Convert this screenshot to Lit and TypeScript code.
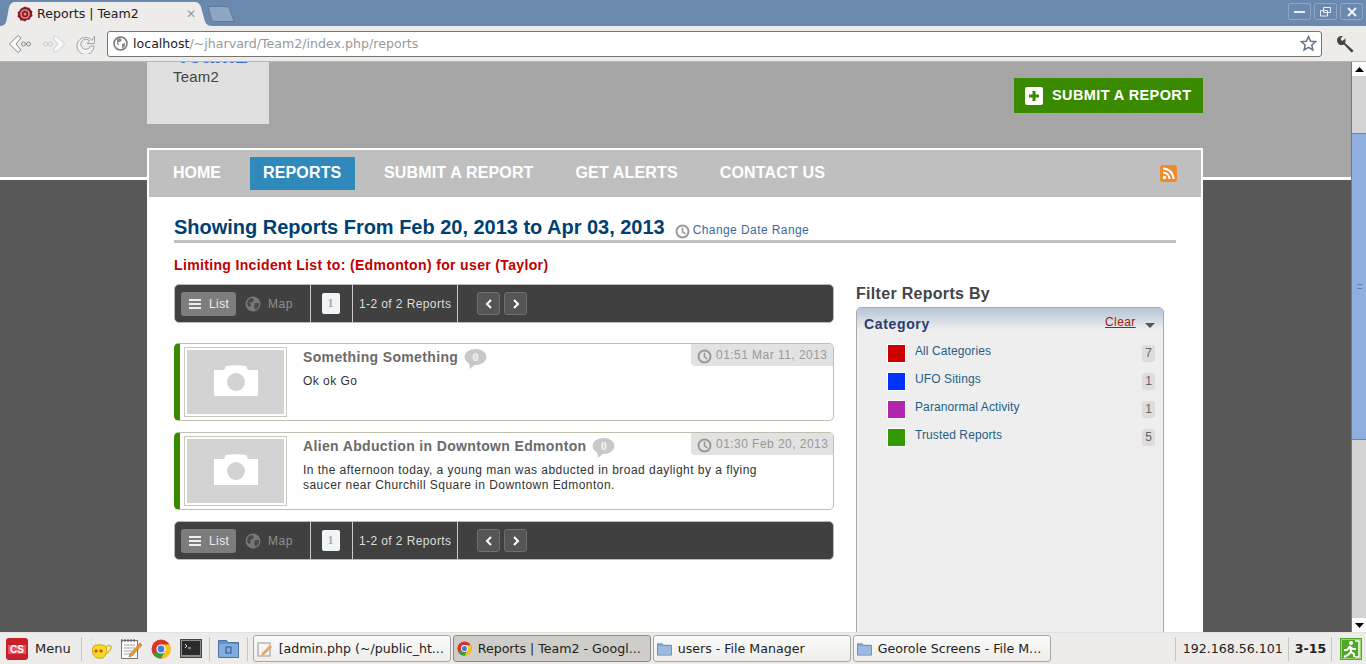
import { LitElement, html, css } from 'lit';
import { customElement } from 'lit/decorators.js';

const clock = (c = '#999') => html`<svg class="clock" width="15" height="15" viewBox="0 0 15 15"><circle cx="7.5" cy="7.5" r="6" fill="none" stroke=${c} stroke-width="2"/><path d="M7.5 3.8v4l3 2" fill="none" stroke=${c} stroke-width="1.6"/></svg>`;

const chromeIcon = (s: number) => html`<svg width=${s} height=${s} viewBox="0 0 20 20">
  <circle cx="10" cy="10" r="9.5" fill="#d8362a"/>
  <path d="M10 10 1.8 14.8A9.5 9.5 0 0 0 10 19.5L14.8 11z" fill="#3c9a3c"/>
  <path d="M10 5.5h8.6A9.5 9.5 0 0 1 10 19.5L14 12z" fill="#f5c518"/>
  <circle cx="10" cy="10" r="4.6" fill="#fff"/><circle cx="10" cy="10" r="3.4" fill="#3f7fd8"/>
</svg>`;

const folderIcon = html`<svg width="15" height="14" viewBox="0 0 16 14"><path d="M0.5 1.5h5l1.5 1.5h8.5v10.5h-15z" fill="#86a9d2" stroke="#6a8cb5"/><rect x="1" y="4" width="14" height="9" fill="#9dbbdf"/></svg>`;

const globeDark = html`<svg width="16" height="16" viewBox="0 0 16 16"><circle cx="8" cy="8" r="7.5" fill="#777"/><path d="M3 4l3-2 3 1-1 3-3 1 1 3-2 1-2-3zM10 7l4 0 0 3-3 4-2-3z" fill="#4a4a4a"/></svg>`;

const camera = html`<svg width="44" height="31" viewBox="0 0 44 31"><path d="M0 5h10l2-4c6-1 14-1 20 0l2 4h10v26H0z" fill="#fff"/><circle cx="22" cy="17" r="9" fill="#d3d3d3"/></svg>`;

const listIcon = html`<svg width="12" height="10" viewBox="0 0 12 10"><path d="M0 0h12v2H0zM0 4h12v2H0zM0 8h12v2H0z" fill="#eee"/></svg>`;

@customElement('app-root')
export class AppRoot extends LitElement {
  static styles = css`
    :host { display: flex; flex-direction: column; width: 1366px; height: 664px; overflow: hidden; font-family: "Liberation Sans", Arial, sans-serif; background: #edecea; }
    * { box-sizing: border-box; }

    /* browser chrome */
    .tabstrip { height: 26px; background: #6b88ae; display: flex; align-items: flex-end; flex: none; }
    .tab { position: relative; width: 212px; height: 24px; display: flex; align-items: center; padding: 0 0 1px 17px; font: 12.6px "DejaVu Sans", sans-serif; color: #222; }
    .tab > svg.shape { position: absolute; left: 0; top: 0; }
    .tab .fav, .tab .label { position: relative; }
    .tab .fav { margin-right: 4px; flex: none; }
    .tab .x { position: absolute; left: 186px; top: 5px; color: #999; font-size: 12px; font-weight: bold; }
    .newtab { margin: 0 0 4px -5px; }
    .winbtns { margin-left: auto; display: flex; gap: 3px; align-self: flex-start; padding: 3px 3px 0 0; }
    .winbtn { width: 23px; height: 17px; border: 1px solid #8ea5c4; border-radius: 2px; background: #6b88ae; display: flex; align-items: center; justify-content: center; }
    .toolbar { height: 36px; background: #edecea; border-bottom: 1px solid #b5b4b0; display: flex; align-items: center; flex: none; padding: 0 0 0 8px; }
    .navico { display: flex; width: 34px; flex: none; }
    .navico.reload { width: 31px; }
    .omni { width: 1215px; height: 26px; flex: none; background: #fff; border: 1px solid #77756f; border-radius: 3px; display: flex; align-items: center; padding: 0 4px 0 5px; font: 12.6px "DejaVu Sans", sans-serif; color: #999; }
    .omni b { font-weight: normal; color: #222; }
    .omni span { margin-left: 5px; flex: 1; }
    .wrench { margin-left: 14px; flex: none; }

    /* page */
    .view { flex: 1; display: flex; min-height: 0; }
    .page { flex: 1; min-width: 0; overflow: hidden; padding-left: 147px; background: linear-gradient(#a6a6a6 115px, #fff 115px, #fff 118px, #585858 118px); }
    .wrap { width: 1056px; }
    .head { height: 86px; display: flex; justify-content: space-between; align-items: flex-start; }
    .logo { width: 122px; height: 62px; background: #e0e0e0; overflow: hidden; padding-left: 26px; color: #444; font-size: 15px; letter-spacing: 0.2px; }
    .logo .name { color: #3b6fd0; font-weight: bold; font-size: 23px; line-height: 22px; margin: -18px 0 0 3px; height: 22px; }
    .logo .sub { margin-top: 3px; line-height: 16px; }
    .submit { margin-top: 16px; width: 189px; height: 35px; background: #3a8a00; color: #fff; font-weight: bold; font-size: 14.5px; display: flex; align-items: center; padding: 0 0 2px 11px; gap: 9px; letter-spacing: 0.4px; }
    .plus { width: 18px; height: 18px; background: #fff; border-radius: 2px; display: flex; position: relative; top: 1px; }

    .nav { height: 49px; background: #bfbfbf; border: 2px solid #fff; border-bottom: 0; display: flex; align-items: flex-start; padding: 7px 24px 0 11px; }
    .nav a { height: 33px; padding: 0 13px 2px; margin-right: 16px; display: flex; align-items: center; color: #fff; font-weight: bold; font-size: 16px; letter-spacing: 0.15px; }
    .nav a:first-child { letter-spacing: 0; }
    .nav a.on { background: #2f8abb; width: 105px; }
    .rss { margin: 8px 0 0 auto; }

    .body { background: #fff; height: 500px; padding: 18px 27px 0; }
    .title { display: flex; align-items: baseline; border-bottom: 3px solid #c0c0c0; height: 28px; }
    .title h1 { margin: 0; font-size: 20px; line-height: 25px; color: #003f73; letter-spacing: -0.02px; }
    .title .clock { margin: 0 3px 0 10px; align-self: flex-end; position: relative; top: -1px; }
    .title a { color: #3a69a0; font-size: 12px; letter-spacing: 0.42px; }
    .limit { margin: 13px 0 10px; font-weight: bold; font-size: 14px; line-height: 18px; color: #c00000; letter-spacing: 0.35px; }

    .cols { display: flex; }
    .left { width: 660px; }
    .right { width: 308px; margin-left: 22px; }

    .bar { height: 39px; background: #404040; border: 1px solid #bbb; border-radius: 5px; display: flex; align-items: center; padding-left: 6px; color: #ddd; font-size: 12px; letter-spacing: 0.4px; }
    .list { width: 55px; height: 24px; background: #7d7d7d; border-radius: 3px; display: flex; align-items: center; gap: 8px; padding-left: 8px; color: #eee; }
    .map { display: flex; align-items: center; gap: 7px; width: 74px; padding-left: 9px; color: #8f8f8f; letter-spacing: 0.5px; }
    .pg { width: 42px; height: 100%; border-left: 1px solid #ccc; display: flex; align-items: center; justify-content: center; padding-right: 2px; }
    .pg span { width: 18px; height: 21px; background: #f0f5f8; border-radius: 2px; color: #aaa; font: bold 12px/21px "Liberation Serif", serif; text-align: center; letter-spacing: 0; }
    .cnt { width: 106px; height: 100%; border-left: 1px solid #ccc; border-right: 1px solid #ccc; display: flex; align-items: center; padding-left: 6px; white-space: nowrap; }
    .arrow { width: 23px; height: 23px; border: 1px solid #6f6f6f; background: #555; border-radius: 3px; display: flex; align-items: center; justify-content: center; }
    .arrow.p { margin: 0 4px 0 19px; }

    .card { position: relative; height: 78px; margin-top: 11px; border: 1px solid #c0bfb2; border-left: 6px solid #3a8a00; border-radius: 5px; display: flex; background: #fff; }
    .bar + .card { margin-top: 20px; }
    .thumb { width: 103px; height: 70px; margin: 3px 0 0 4px; border: 1px solid #c8c8bc; padding: 2px; flex: none; }
    .thumb div { height: 100%; background: #d3d3d3; display: flex; align-items: center; justify-content: center; padding-bottom: 3px; }
    .txt { margin-left: 16px; width: 470px; }
    .t { display: flex; align-items: flex-start; color: #6b6b6b; font-weight: bold; font-size: 14px; line-height: 18px; margin-top: 4px; letter-spacing: 0.35px; }
    .bubble { margin: 1px 0 0 6px; width: 23px; height: 21px; position: relative; }
    .bubble span { position: absolute; left: 0; top: 1px; width: 23px; text-align: center; color: #f2f2f2; font: bold 12px/15px "Liberation Serif", serif; }
    .d { margin-top: 4px; font-size: 12px; line-height: 15px; color: #333; letter-spacing: 0.46px; }
    .date { position: absolute; right: 0; top: 0; width: 142px; height: 22px; background: #e2e2e2; border-radius: 0 4px 0 4px; color: #999; font-size: 12px; letter-spacing: 0.46px; display: flex; align-items: center; padding-left: 6px; gap: 4px; white-space: nowrap; }
    .date .clock { position: relative; top: 1px; flex: none; }
    .bar.bottom { margin-top: 11px; }

    .right h2 { margin: 0; font-size: 16px; line-height: 20px; color: #444; letter-spacing: 0.3px; }
    .panel { margin-top: 3px; height: 420px; background: #eee; border: 1px solid #aaa; border-radius: 5px 5px 0 0; }
    .ph { height: 22px; background: linear-gradient(#b5c5d8, #eee); display: flex; padding: 8px 0 0 7px; border-radius: 4px 4px 0 0; position: relative; }
    .ph b { color: #2c3a70; font-size: 14px; line-height: 17px; letter-spacing: 0.65px; }
    .ph a { position: absolute; left: 248px; top: 7px; color: #a0200a; font-size: 12px; line-height: 15px; text-decoration: underline; letter-spacing: 0.4px; }
    .caret { position: absolute; left: 288px; top: 15px; width: 0; height: 0; border: 5px solid transparent; border-top: 5px solid #555; border-bottom: 0; }
    .cat { height: 28px; display: flex; position: relative; padding-left: 30px; }
    .cats { padding-top: 14px; }
    .sw { width: 19px; height: 19px; border: 1px solid #fff; flex: none; }
    .cat a { margin-left: 9px; color: #1f5f85; font-size: 12px; line-height: 15px; letter-spacing: 0.1px; }
    .n { position: absolute; left: 285px; top: 1px; width: 13px; height: 17px; background: #ddd; border-radius: 3px; color: #666; font-size: 12px; line-height: 17px; text-align: center; }

    .scroll { width: 15px; flex: none; background: #d4d4d4; border-left: 1px solid #777; display: flex; flex-direction: column; }
    .sbtn { height: 14px; background: #fff; display: flex; align-items: center; justify-content: center; flex: none; }
    .track { flex: 1; padding-top: 57px; }
    .thumbbar { height: 307px; background: #8fb0df; border-top: 1px solid #6f87a8; border-bottom: 1px solid #6f87a8; display: flex; align-items: center; justify-content: center; }
    .thumbbar i { width: 5px; height: 5px; border-top: 1px solid #5d7cab; border-bottom: 1px solid #5d7cab; }

    /* taskbar */
    .task { height: 32px; flex: none; background: #edecea; display: flex; align-items: center; font: 12.6px "DejaVu Sans", sans-serif; color: #222; padding-left: 6px; border-top: 1px solid #e2e1de; white-space: nowrap; }
    .task > svg { flex: none; }
    .sep { width: 1px; height: 24px; background: #c6c5c1; flex: none; }
    .menu { margin: 0 10px 0 7px; font-size: 13px; }
    .ti { margin-left: 8px; width: 22px; display: flex; justify-content: center; flex: none; }
    .win { width: 198px; height: 27px; flex: none; margin-right: 2px; border: 1px solid #a8a7a3; border-radius: 3px; background: linear-gradient(#fbfbfa, #eeedeb); display: flex; align-items: center; padding-left: 3px; gap: 6px; overflow: hidden; }
    .win svg { flex: none; }
    .win.on { background: #cfcdc9; border-color: #8c8b87; }
    .ip { width: 112px; padding-left: 7px; flex: none; }
    .time { width: 42px; padding-left: 6px; font-weight: bold; flex: none; }
  `;

  private bar(cls = '') {
    return html`<div class="bar ${cls}">
      <div class="list">${listIcon}List</div>
      <div class="map">${globeDark}Map</div>
      <div class="pg"><span>1</span></div>
      <div class="cnt">1-2 of 2 Reports</div>
      <div class="arrow p"><svg width="8" height="10" viewBox="0 0 8 10"><path d="M6 1 2 5l4 4" fill="none" stroke="#fff" stroke-width="2"/></svg></div>
      <div class="arrow"><svg width="8" height="10" viewBox="0 0 8 10"><path d="M2 1l4 4-4 4" fill="none" stroke="#fff" stroke-width="2"/></svg></div>
    </div>`;
  }

  private card(title: string, date: string, desc: unknown) {
    return html`<div class="card">
      <div class="thumb"><div>${camera}</div></div>
      <div class="txt">
        <div class="t">${title}
          <div class="bubble"><svg width="23" height="21" viewBox="0 0 23 21"><ellipse cx="11.5" cy="8" rx="11" ry="8" fill="#c8c8c8"/><path d="M5 12l1 8 7-6z" fill="#c8c8c8"/></svg><span>0</span></div>
        </div>
        <div class="d">${desc}</div>
      </div>
      <div class="date">${clock()}${date}</div>
    </div>`;
  }

  render() {
    const cats = [
      ['All Categories', '#cc0000', '7'],
      ['UFO Sitings', '#0033ff', '1'],
      ['Paranormal Activity', '#b026ae', '1'],
      ['Trusted Reports', '#339900', '5'],
    ];
    return html`
      <div class="tabstrip">
        <div class="tab">
          <svg class="shape" width="212" height="24" viewBox="0 0 212 24"><path d="M0 24c5 0 6-3 7-8l2-11c1-3 3-5 6-5h180c3 0 5 2 6 5l3 11c1 5 3 8 8 8z" fill="#edecea"/></svg>
          <svg class="fav" width="16" height="16" viewBox="0 0 16 16"><path d="M8 .5l2 1 2.5.2 1 2 1.8 1.500-.3 2.300.5 2.500-2 1.500-1 2.200-2.500 0L8 15.500l-2-1-2.500 0-1-2.200-2-1.500.5-2.500L.7 6.200l1.800-1.500 1-2L6 1.500z" fill="#8c1a22"/><circle cx="8" cy="8" r="4.800" fill="#d98f8f"/><circle cx="8" cy="8" r="3.200" fill="#8c1a22"/><circle cx="8" cy="8" r="1.500" fill="#d98f8f"/></svg>
          <span class="label">Reports | Team2</span>
          <span class="x">✕</span>
        </div>
        <svg class="newtab" width="29" height="16" viewBox="0 0 29 16"><path d="M1 .5h18c2 0 3 1 4 4l3 8c.5 2 1 3 2 3H8c-2 0-3-1-4-4z" fill="#8ea5c4" stroke="#5f7ba0"/></svg>
        <div class="winbtns">
          <div class="winbtn"><svg width="11" height="4" viewBox="0 0 11 4"><rect y="1" width="11" height="2" fill="#e8eef5"/></svg></div>
          <div class="winbtn"><svg width="11" height="10" viewBox="0 0 11 10"><path d="M3.5.5h7v5h-7zM.5 3.5h7v5.500h-7z" fill="none" stroke="#e8eef5"/></svg></div>
          <div class="winbtn"><svg width="10" height="10" viewBox="0 0 10 10"><path d="M1 1l8 8M9 1l-8 8" stroke="#f0f4f8" stroke-width="2"/></svg></div>
        </div>
      </div>
      <div class="toolbar">
        <div class="navico"><svg width="24" height="20" viewBox="0 0 24 20"><path d="M1.5 10 10 1.500l3 2.500L8 10l5 6-3 2.500z" fill="#fafafa" stroke="#8a8a8a"/><circle cx="15.500" cy="10" r="2" fill="none" stroke="#888"/><circle cx="20.500" cy="10" r="2" fill="none" stroke="#888"/></svg></div>
        <div class="navico"><svg width="24" height="20" viewBox="0 0 24 20"><path d="M22.5 10 14 1.500l-3 2.500 5 6-5 6 3 2.500z" fill="#f8f8f8" stroke="#cfcfcf"/><circle cx="8.500" cy="10" r="2" fill="none" stroke="#ccc"/><circle cx="3.500" cy="10" r="2" fill="none" stroke="#ccc"/></svg></div>
        <div class="navico reload"><svg width="20" height="20" viewBox="0 0 20 20"><path d="M16 6.500A8.500 8.500 0 1 0 18 12h-3.500A5 5 0 1 1 13.600 7L11 9.500h7.500V2z" fill="#f4f4f4" stroke="#a0a0a0"/></svg></div>
        <div class="omni">
          <svg width="15" height="15" viewBox="0 0 15 15"><circle cx="7.5" cy="7.500" r="6.500" fill="#fff" stroke="#777" stroke-width="1.5"/><path d="M4 3l3-1 2 2-2 2-2 0 1 3-2-1zM9 8l3-1 0 3-3 3z" fill="#888"/></svg>
          <span><b>localhost</b>/~jharvard/Team2/index.php/reports</span>
          <svg width="17" height="17" viewBox="0 0 17 17"><path d="M8.500 1.500l2.100 4.700 5 .5-3.800 3.300 1.100 5-4.400-2.600-4.400 2.600 1.100-5L1.400 6.700l5-.5z" fill="#fff" stroke="#66738c" stroke-width="1.5"/></svg>
        </div>
        <svg class="wrench" width="18" height="18" viewBox="0 0 18 18"><path d="M1 5c0-2 2-4 4.500-4L7 1 4.500 3.500 6 6l2.500-1.500L9 3c1 2 .5 4 0 5l8 7c.5 1 0 2-1.500 2.500L8 9.500c-2 1-3.500 .5-5 0C2 8.500 1 7 1 5z" fill="#444"/></svg>
      </div>

      <div class="view">
        <div class="page"><div class="wrap">
          <div class="head">
            <div class="logo"><div class="name">Team2</div><div class="sub">Team2</div></div>
            <div class="submit">
              <span class="plus"><svg width="18" height="18" viewBox="0 0 18 18"><path d="M7.500 4h3v3.500H14v3h-3.500V14h-3v-3.500H4v-3h3.500z" fill="#3a8a00"/></svg></span>
              SUBMIT A REPORT
            </div>
          </div>
          <div class="nav">
            <a>HOME</a><a class="on">REPORTS</a><a>SUBMIT A REPORT</a><a>GET ALERTS</a><a>CONTACT US</a>
            <svg class="rss" width="17" height="17" viewBox="0 0 17 17"><rect width="17" height="17" rx="3" fill="#f08a2c"/><circle cx="4.500" cy="12.500" r="1.800" fill="#fff"/><path d="M3 7.500a6.500 6.500 0 0 1 6.500 6.500M3 3.500A10.500 10.500 0 0 1 13.500 14" fill="none" stroke="#fff" stroke-width="2"/></svg>
          </div>
          <div class="body">
            <div class="title"><h1>Showing Reports From Feb 20, 2013 to Apr 03, 2013</h1>${clock()}<a>Change Date Range</a></div>
            <div class="limit">Limiting Incident List to: (Edmonton) for user (Taylor)</div>
            <div class="cols">
              <div class="left">
                ${this.bar()}
                ${this.card('Something Something', '01:51 Mar 11, 2013', 'Ok ok Go')}
                ${this.card('Alien Abduction in Downtown Edmonton', '01:30 Feb 20, 2013', html`In the afternoon today, a young man was abducted in broad daylight by a flying<br>saucer near Churchill Square in Downtown Edmonton.`)}
                ${this.bar('bottom')}
              </div>
              <div class="right">
                <h2>Filter Reports By</h2>
                <div class="panel">
                  <div class="ph"><b>Category</b><a>Clear</a><i class="caret"></i></div>
                  <div class="cats">
                    ${cats.map(c => html`<div class="cat"><span class="sw" style="background:${c[1]}"></span><a>${c[0]}</a><span class="n">${c[2]}</span></div>`)}
                  </div>
                </div>
              </div>
            </div>
          </div>
        </div></div>
        <div class="scroll">
          <div class="sbtn"><svg width="9" height="5" viewBox="0 0 9 5"><path d="M4.500 0 9 5H0z"/></svg></div>
          <div class="track"><div class="thumbbar"><i></i></div></div>
          <div class="sbtn"><svg width="9" height="5" viewBox="0 0 9 5"><path d="M0 0h9L4.500 5z"/></svg></div>
        </div>
      </div>

      <div class="task">
        <svg width="22" height="22" viewBox="0 0 22 22"><rect width="22" height="22" rx="3" fill="#c8202a"/><rect x="2" y="7" width="18" height="9" fill="#e8505a"/><text x="11" y="15" font-family="Liberation Sans" font-size="10" font-weight="bold" fill="#fff" text-anchor="middle">CS</text></svg>
        <span class="menu">Menu</span>
        <div class="sep"></div>
        <div class="ti"><svg width="22" height="22" viewBox="0 0 22 22"><path d="M3 9c2-3 11-3 13 0 2 5-1 10-3 11H7C4 19 1 14 3 9z" fill="#f5dc22" stroke="#c8a810"/><path d="M16 9c2-2 6-2 5 1-1 3-3 5-6 6" fill="none" stroke="#dcc018" stroke-width="1.5"/><path d="M3 7C1 5 1 3 2 1c1 1 3 3 4 5z" fill="#f4f4f4" stroke="#ccc" stroke-width=".5"/><path d="M6 11l2 2-2 2-2-2zM11 11l2 2-2 2-2-2z" fill="#d43"/></svg></div>
        <div class="ti"><svg width="22" height="22" viewBox="0 0 22 22"><rect x="1.5" y="2.500" width="16" height="18" fill="#fafafa" stroke="#777"/><path d="M4 7h11M4 10h11M4 13h9M4 16h7" stroke="#aaa"/><path d="M2 1v3M5 1v3M8 1v3M11 1v3M14 1v3" stroke="#555"/><path d="M10 16l10-11 2 2-10 11-3 1z" fill="#e8963a" stroke="#a85d10" stroke-width=".5"/></svg></div>
        <div class="ti">${chromeIcon(20)}</div>
        <div class="ti"><svg width="22" height="20" viewBox="0 0 22 20"><rect x=".5" y=".5" width="21" height="18" fill="#8c8c8c" stroke="#444"/><rect x="2" y="2" width="18" height="14" fill="#2a2a2a"/><path d="M5 5l2 2-2 2M8 9h3" stroke="#ddd" fill="none"/></svg></div>
        <div class="sep" style="margin-left:7px"></div>
        <div class="ti"><svg width="21" height="19" viewBox="0 0 21 19"><path d="M.5 1.500h8l2 2h10v15H.5z" fill="#5f93cf" stroke="#4a74a8"/><rect x="1" y="5" width="19" height="13" fill="#82ace0"/><rect x="8" y="8" width="5" height="6" fill="none" stroke="#2c558a"/></svg></div>
        <div class="sep" style="margin-left:7px"></div>
        <div class="win" style="margin-left:5px"><svg width="16" height="16" viewBox="0 0 16 16"><rect x="1" y="2" width="12" height="13" fill="#f5f5f5" stroke="#999"/><path d="M5 12l8-8 2 2-8 8-3 1z" fill="#e8a566"/></svg>[admin.php (~/public_ht...</div>
        <div class="win on">${chromeIcon(15)}Reports | Team2 - Googl...</div>
        <div class="win">${folderIcon}users - File Manager</div>
        <div class="win">${folderIcon}Georole Screens - File M...</div>
        <div class="sep" style="margin-left:122px"></div>
        <span class="ip">192.168.56.101</span>
        <div class="sep"></div>
        <span class="time">3-15</span>
        <div class="sep"></div>
        <svg style="margin-left:8px" width="22" height="22" viewBox="0 0 22 22"><rect width="22" height="22" fill="#4fa82a"/><rect x="1.500" y="1.500" width="19" height="19" fill="none" stroke="#9ad66c"/><path d="M15 3h4v16h-4" fill="none" stroke="#fff" stroke-width="1.5"/><circle cx="11" cy="5" r="2" fill="#fff"/><path d="M10 8l-3 4-3 0M10 8l1 6 3 2 0 3M11 14l-3 3-4 2M10 9l3 2 3 0" stroke="#fff" stroke-width="2" fill="none"/></svg>
      </div>
    `;
  }
}
